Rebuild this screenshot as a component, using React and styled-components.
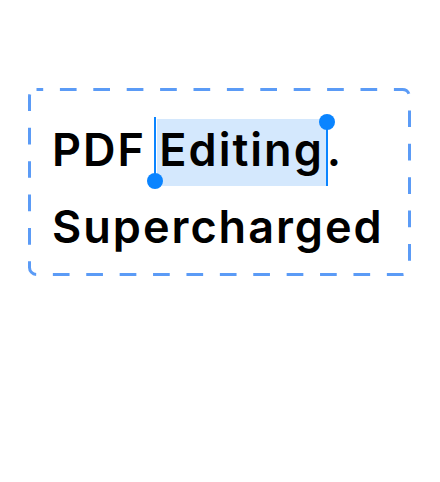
import React from 'react';
import styled, { createGlobalStyle } from 'styled-components';

const GlobalStyle = createGlobalStyle`
  html, body {
    margin: 0;
    padding: 0;
    background: #ffffff;
  }
  body {
    font-family: Inter, "Noto Sans", sans-serif;
  }
`;

const Page = styled.div`
  width: 440px;
  height: 482px;
  padding: 88px 29px 0 28px;
  box-sizing: border-box;
`;

const Frame = styled.div`
  position: relative;
  height: 188px;
  box-sizing: border-box;
  padding: 23px 10px 10px 24px;
`;

const DashedOutline = styled.svg`
  position: absolute;
  inset: 0;
  width: 100%;
  height: 100%;
  pointer-events: none;
`;

const Headline = styled.h1`
  margin: 0;
  font-family: Inter, "Noto Sans", sans-serif;
  font-weight: 600;
  font-size: 45px;
  line-height: 77px;
  color: #000000;
  letter-spacing: 2px;
  white-space: nowrap;
`;

const Gap = styled.span`
  letter-spacing: 0;
`;

const Selection = styled.span`
  position: relative;
  background: #d4e8fd;
  padding: 3px 3px 9px 2px;
`;

const CaretLine = styled.span`
  position: absolute;
  width: 2px;
  background: #0a84ff;
  ${(p) =>
    p.$side === 'start'
      ? 'left: -3px; top: -2px; height: 64px;'
      : 'right: -1px; top: 3px; height: 64px;'}
`;

const Knob = styled.span`
  position: absolute;
  width: 16px;
  height: 16px;
  border-radius: 50%;
  background: #0a84ff;
  ${(p) =>
    p.$side === 'start'
      ? 'left: -10px; top: 54px;'
      : 'right: -8px; top: -5px;'}
`;

const Caret = ({ side }) => (
  <>
    <CaretLine $side={side} />
    <Knob $side={side} />
  </>
);

export default function App() {
  return (
    <>
      <GlobalStyle />
      <Page>
        <Frame>
          <DashedOutline viewBox="0 0 383 188" preserveAspectRatio="none">
            <rect
              x="1.5"
              y="1.5"
              width="380"
              height="185"
              rx="7"
              fill="none"
              stroke="#5b9bf6"
              strokeWidth="3"
              strokeDasharray="16.7 16.7"
              strokeDashoffset="10"
            />
          </DashedOutline>
          <Headline>
            PDF<Gap> </Gap>
            <Selection>
              Editing
              <Caret side="start" />
              <Caret side="end" />
            </Selection>
            .
            <br />
            Supercharged
          </Headline>
        </Frame>
      </Page>
    </>
  );
}
